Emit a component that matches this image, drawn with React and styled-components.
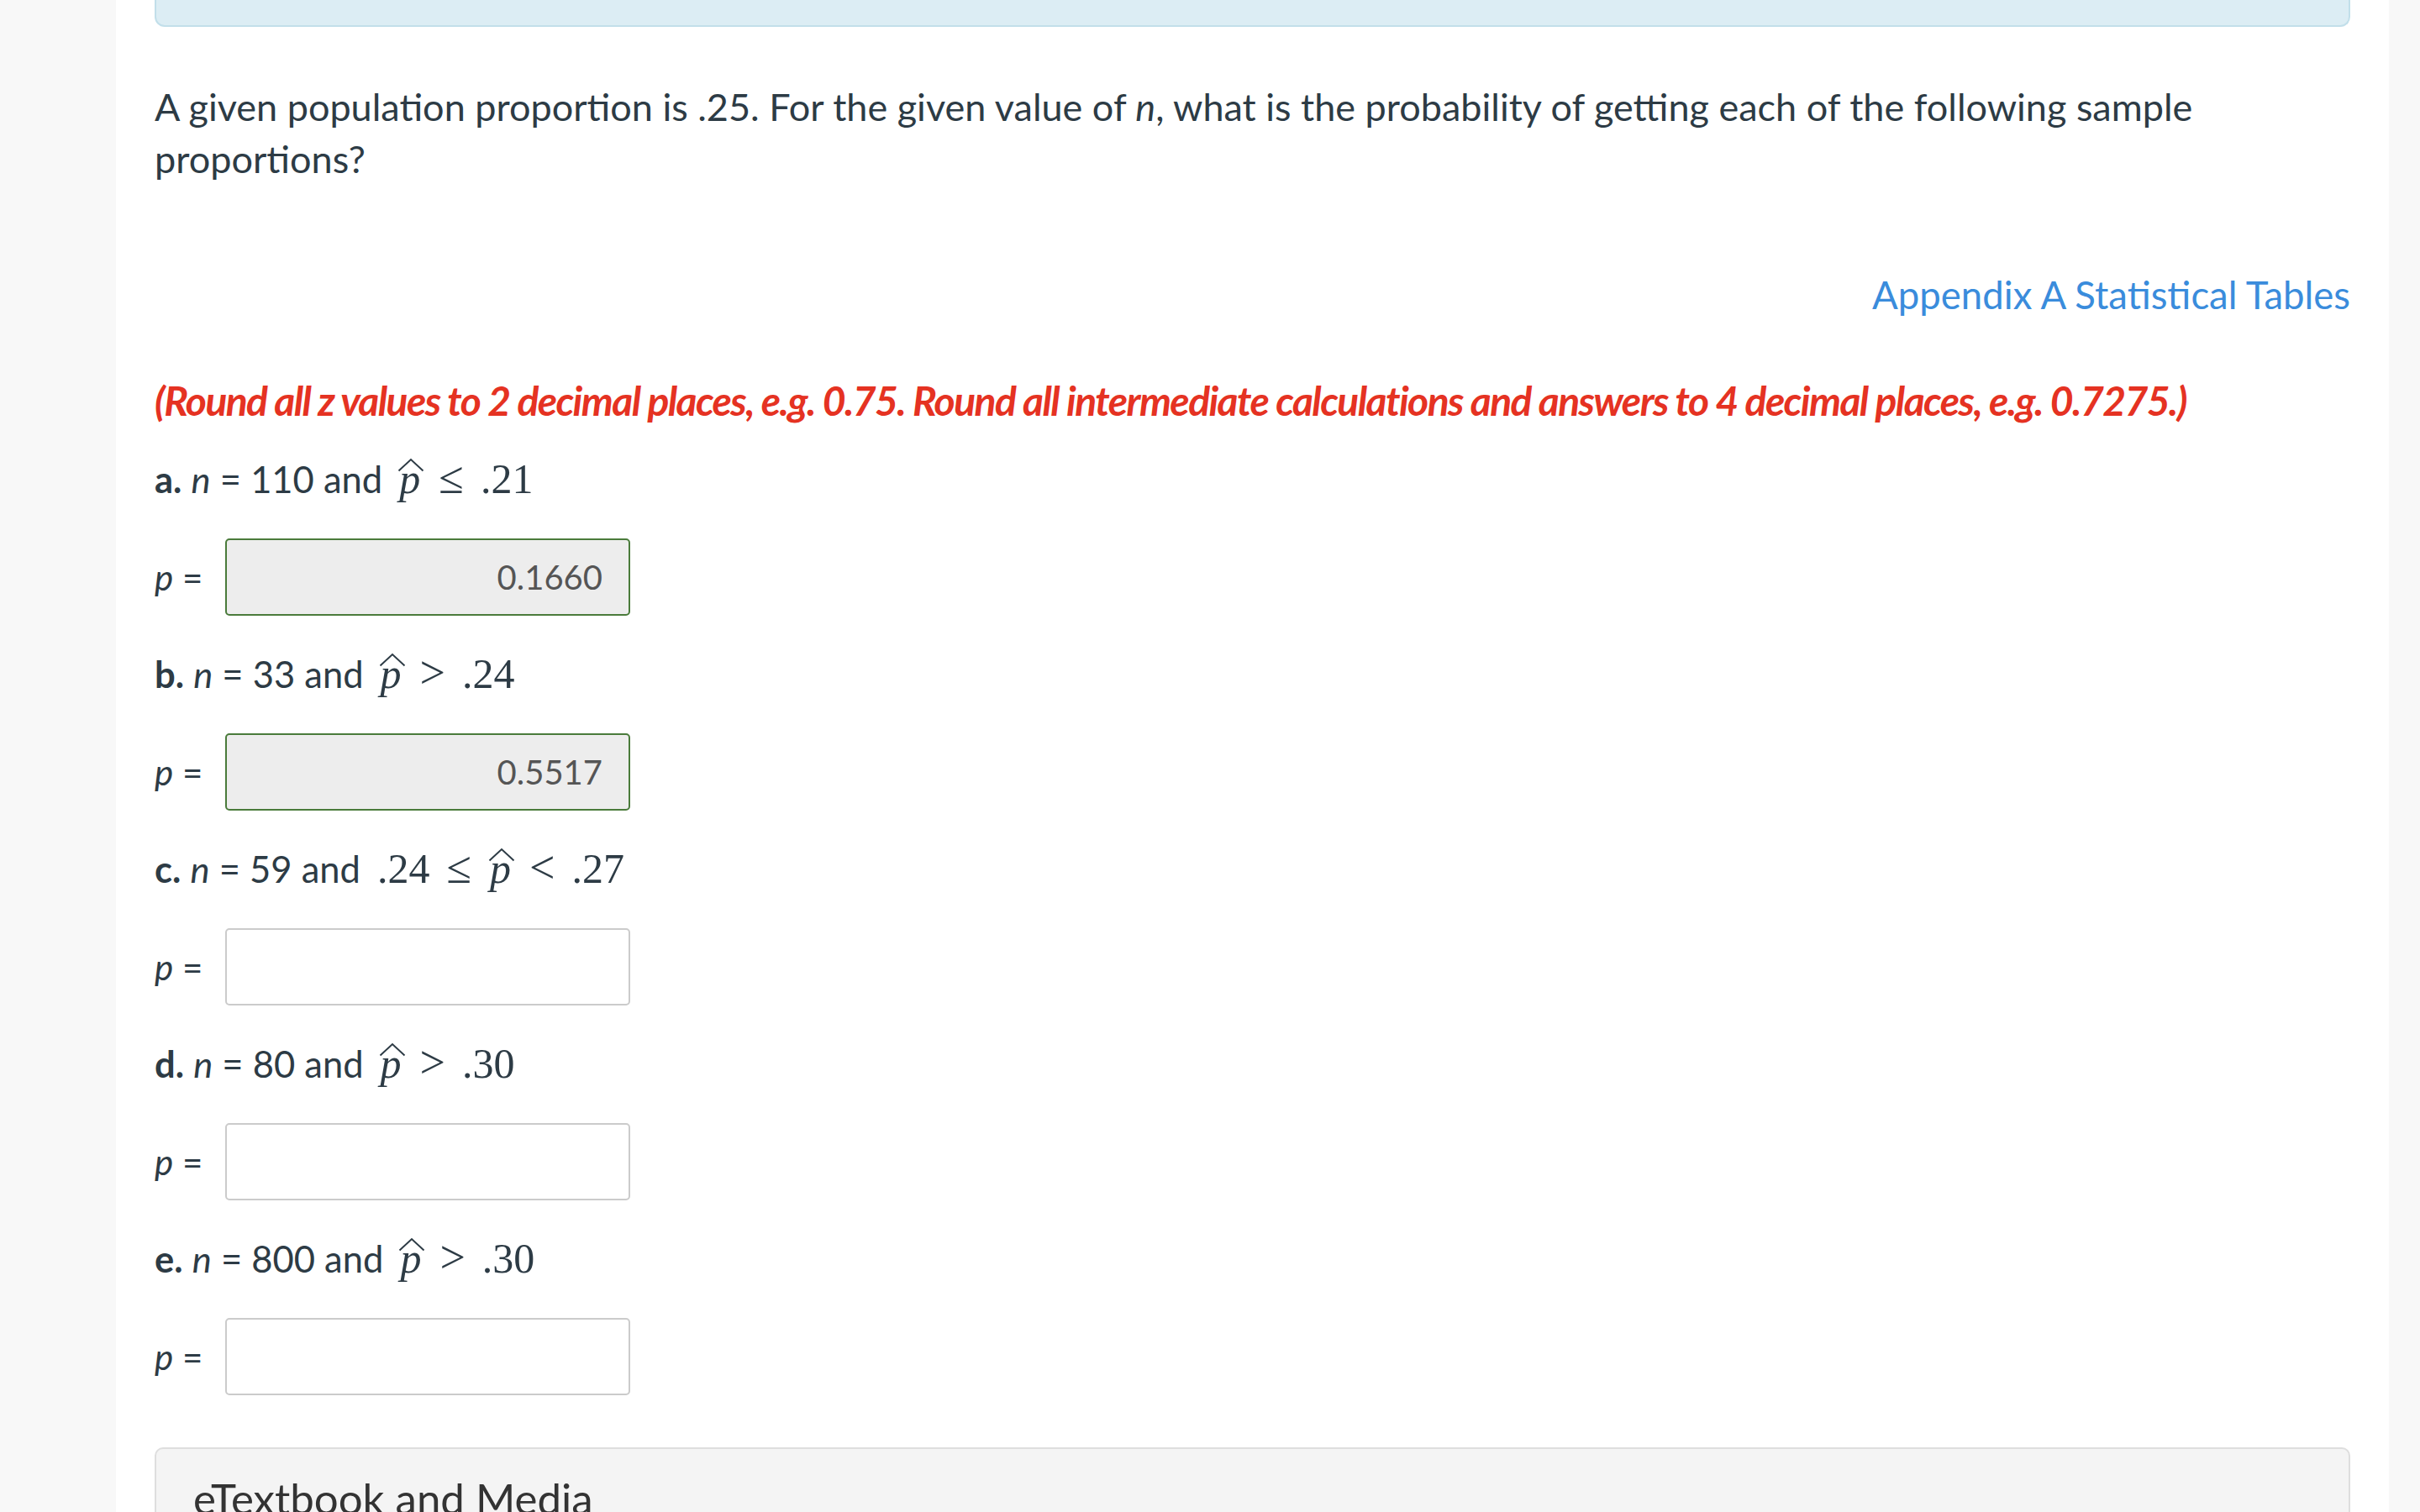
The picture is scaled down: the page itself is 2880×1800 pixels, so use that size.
import React from "react"
import styled, { createGlobalStyle } from "styled-components"

const GlobalStyle = createGlobalStyle`
  html, body {
    margin: 0;
    padding: 0;
    background: #f8f8f8;
  }
  body {
    font-family: Lato, "Liberation Sans", sans-serif;
    color: #2d3b45;
  }
`

const Page = styled.div`
  display: flex;
  min-height: 100vh;
  padding: 0 37px 0 138px;
  background: #f8f8f8;
  overflow: hidden;
`

const Panel = styled.main`
  flex: 1;
  background: #fff;
  padding: 0 46px;
`

const InfoBox = styled.div`
  height: 32px;
  box-sizing: border-box;
  background: #dcedf4;
  border: 2px solid #c2dfea;
  border-top: none;
  border-radius: 0 0 12px 12px;
`

const Question = styled.p`
  margin: 64px 0 0;
  font-size: 45px;
  line-height: 62px;
`

const LinkRow = styled.div`
  margin-top: 100px;
  text-align: right;
  font-size: 45.5px;
  line-height: 62px;
`

const TableLink = styled.a`
  color: #3a8cdc;
  text-decoration: none;
`

const Note = styled.p`
  margin: 64px 0 0;
  font-size: 48px;
  line-height: 62px;
  font-weight: 700;
  font-style: italic;
  letter-spacing: -1.6px;
  color: #e53222;
`

const Parts = styled.div`
  display: flex;
  flex-direction: column;
  gap: 41px;
  margin-top: 34px;
`

const Part = styled.section`
  display: flex;
  flex-direction: column;
  gap: 43px;
`

const Heading = styled.div`
  height: 56px;
  font-size: 43.5px;
  line-height: 56px;
  white-space: nowrap;
`

const Letter = styled.b`
  font-weight: 700;
`

const Var = styled.i`
  font-style: italic;
`

const Math = styled.span`
  font-family: "Liberation Serif", "Times New Roman", serif;
  font-size: 50px;
  line-height: 1;
  margin-left: ${(p) => (p.$lead ? "20px" : "18px")};
`

const Rel = styled.span`
  margin: 0 20px;
  font-size: 54px;
  line-height: 1;
`

const HatVar = styled.span`
  position: relative;
  display: inline-block;
  font-style: italic;
  padding: 0 2px;

  svg {
    position: absolute;
    left: 0;
    top: 0;
    width: 32px;
    height: 17px;
  }
`

const AnswerRow = styled.div`
  display: flex;
  align-items: center;
`

const AnswerLabel = styled.span`
  width: 84px;
  font-size: 42px;
`

const AnswerBox = styled.input`
  width: 482px;
  height: 92px;
  box-sizing: border-box;
  padding: 0 31px;
  border: 2px solid ${(p) => (p.$correct ? "#4a7b3b" : "#cbcbcb")};
  border-radius: 5px;
  background: ${(p) => (p.$correct ? "#ededed" : "#fff")};
  font-family: Lato, "Liberation Sans", sans-serif;
  font-size: 40px;
  color: #555;
  text-align: right;
  outline: none;
`

const Media = styled.div`
  margin-top: 62px;
  padding: 27px 44px 30px;
  background: #f4f4f4;
  border: 2px solid #dedede;
  border-radius: 10px;
  font-size: 51px;
  line-height: 64px;
  color: #333;
`

const PHat = () => (
  <HatVar>
    <svg viewBox="0 0 32 17" fill="none">
      <path d="M1.5 15.5 L16 2 L30.5 15.5" stroke="#2d3b45" strokeWidth="2" />
    </svg>
    p
  </HatVar>
)

const parts = [
  { letter: "a.", n: "110", expr: [null, "≤", ".21"], value: "0.1660" },
  { letter: "b.", n: "33", expr: [null, ">", ".24"], value: "0.5517" },
  { letter: "c.", n: "59", expr: [".24", "≤", null, "<", ".27"], value: "" },
  { letter: "d.", n: "80", expr: [null, ">", ".30"], value: "" },
  { letter: "e.", n: "800", expr: [null, ">", ".30"], value: "" },
]

const Expression = ({ items }) => (
  <Math $lead={items[0] !== null}>
    {items.map((item, i) => {
      if (item === null) return <PHat key={i} />
      if (item === "≤" || item === "<" || item === ">") return <Rel key={i}>{item}</Rel>
      return <span key={i}>{item}</span>
    })}
  </Math>
)

export default function App() {
  return (
    <>
      <GlobalStyle />
      <Page>
        <Panel>
          <InfoBox />
          <Question>
            A given population proportion is .25. For the given value of <Var>n</Var>, what is the
            probability of getting each of the following sample proportions?
          </Question>
          <LinkRow>
            <TableLink href="#">Appendix A Statistical Tables</TableLink>
          </LinkRow>
          <Note>
            (Round all z values to 2 decimal places, e.g. 0.75. Round all intermediate calculations
            and answers to 4 decimal places, e.g. 0.7275.)
          </Note>
          <Parts>
            {parts.map((part) => (
              <Part key={part.letter}>
                <Heading>
                  <Letter>{part.letter}</Letter> <Var>n</Var> = {part.n} and
                  <Expression items={part.expr} />
                </Heading>
                <AnswerRow>
                  <AnswerLabel>
                    <Var>p</Var> =
                  </AnswerLabel>
                  <AnswerBox readOnly value={part.value} $correct={part.value !== ""} />
                </AnswerRow>
              </Part>
            ))}
          </Parts>
          <Media>eTextbook and Media</Media>
        </Panel>
      </Page>
    </>
  )
}
